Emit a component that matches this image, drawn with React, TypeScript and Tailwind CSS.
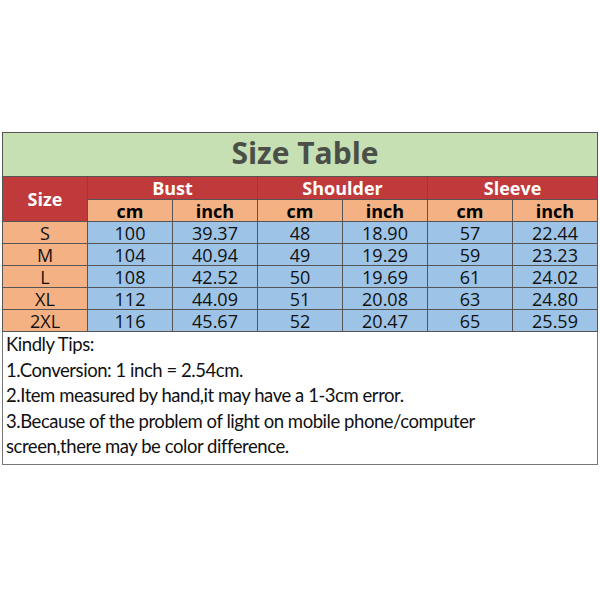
const rows = [
  ["S", "100", "39.37", "48", "18.90", "57", "22.44"],
  ["M", "104", "40.94", "49", "19.29", "59", "23.23"],
  ["L", "108", "42.52", "50", "19.69", "61", "24.02"],
  ["XL", "112", "44.09", "51", "20.08", "63", "24.80"],
  ["2XL", "116", "45.67", "52", "20.47", "65", "25.59"],
];

const tips = [
  "Kindly Tips:",
  "1.Conversion: 1 inch = 2.54cm.",
  "2.Item measured by hand,it may have a 1-3cm error.",
  "3.Because of the problem of light on mobile phone/computer",
  "screen,there may be color difference.",
];

export default function App() {
  return (
    <div className="min-h-[600px] w-[600px] bg-white pt-[132px] pl-[2px] font-['Open_Sans','Liberation_Sans',sans-serif]">
      <table className="w-[596px] table-fixed border-collapse text-center">
        <tbody>
          <tr className="h-[44px]">
            <td colSpan={7} className="border border-[#555] bg-[#c6e0b4] pb-[3px] pl-[10px] text-[30px] font-bold leading-none text-[#4a4f48]">
              Size Table
            </td>
          </tr>
          <tr className="h-[23px] bg-[#c0393b] text-[18px] font-bold leading-none text-white">
            <td rowSpan={2} className="border border-[#555]">Size</td>
            <td colSpan={2} className="border border-[#555]">Bust</td>
            <td colSpan={2} className="border border-[#555]">Shoulder</td>
            <td colSpan={2} className="border border-[#555]">Sleeve</td>
          </tr>
          <tr className="h-[22px] bg-[#f4b183] text-[18px] font-bold leading-none text-black">
            {["cm", "inch", "cm", "inch", "cm", "inch"].map((u, i) => (
              <td key={i} className="border border-[#555]">{u}</td>
            ))}
          </tr>
          {rows.map((r) => (
            <tr key={r[0]} className="h-[22px] text-[18px] leading-none text-[#111]">
              {r.map((v, i) => (
                <td key={i} className={`border border-[#555] ${i === 0 ? "bg-[#f4b183]" : "bg-[#9dc3e6]"}`}>
                  {v}
                </td>
              ))}
            </tr>
          ))}
          <tr className="h-[130px]">
            <td colSpan={7} className="border border-[#777] px-[3px] pb-[4px] text-left align-top font-['Lato','Open_Sans',sans-serif] text-[18.5px] leading-[25.5px] tracking-[-0.45px] text-[#111]">
              {tips.map((t) => (
                <div key={t}>{t}</div>
              ))}
            </td>
          </tr>
        </tbody>
      </table>
    </div>
  );
}
